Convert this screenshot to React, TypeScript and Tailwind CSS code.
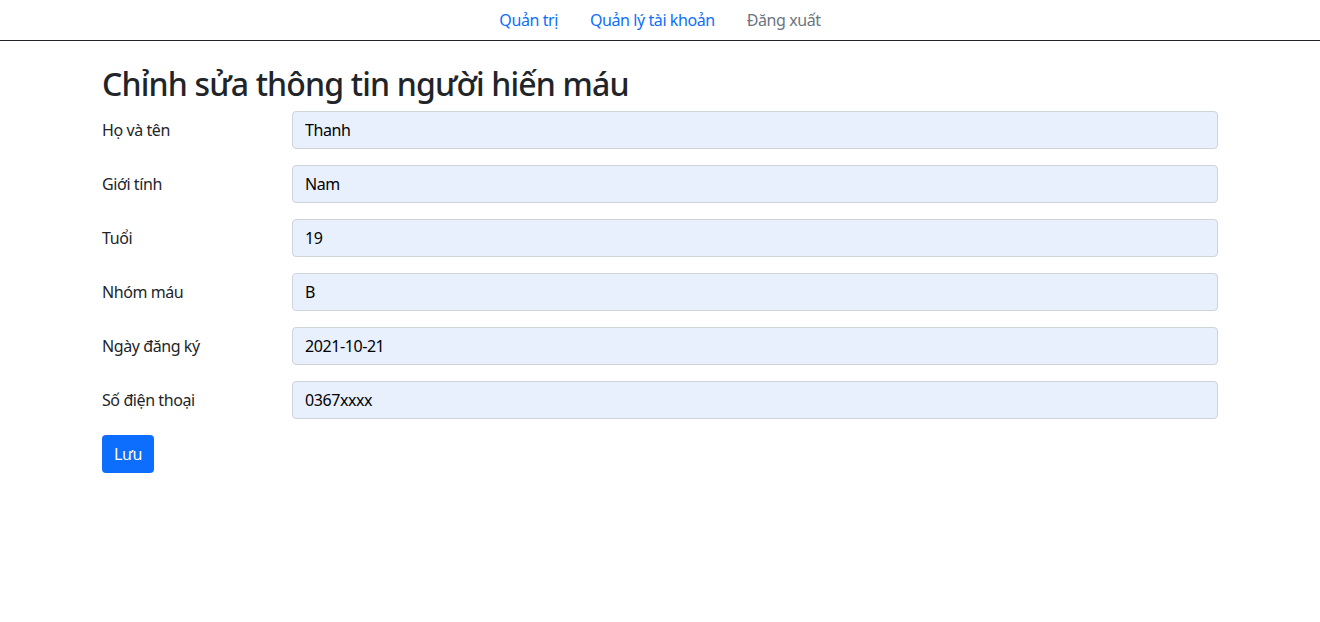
import React from "react";

const fields: { label: string; value: string }[] = [
  { label: "Họ và tên", value: "Thanh" },
  { label: "Giới tính", value: "Nam" },
  { label: "Tuổi", value: "19" },
  { label: "Nhóm máu", value: "B" },
  { label: "Ngày đăng ký", value: "2021-10-21" },
  { label: "Số điện thoại", value: "0367xxxx" },
];

export default function App() {
  return (
    <div
      className="min-h-screen bg-white text-[#212529] text-base leading-6 tracking-[-0.026em]"
      style={{ fontFamily: '"Noto Sans", "Open Sans", sans-serif' }}
    >
      {/* top nav */}
      <nav className="flex justify-center border-b border-[#212529]">
        <a href="#" className="px-4 py-2 text-[#0d6efd]">
          Quản trị
        </a>
        <a href="#" className="px-4 py-2 text-[#0d6efd]">
          Quản lý tài khoản
        </a>
        <a href="#" className="px-4 py-2 text-[#6c757d]">
          Đăng xuất
        </a>
      </nav>

      <div className="mx-auto w-[1140px] px-3">
        <h2 className="mt-6 mb-2 text-[32px] font-medium leading-[1.2] tracking-[-0.026em]">
          Chỉnh sửa thông tin người hiến máu
        </h2>

        <form onSubmit={(e) => e.preventDefault()}>
          {fields.map((f) => (
            <div key={f.label} className="mb-4 flex">
              <label className="w-[190px] shrink-0 pt-[7px] pb-[7px]">
                {f.label}
              </label>
              <input
                defaultValue={f.value}
                className="h-[38px] flex-1 rounded border border-[#ced4da] bg-[#e8f0fe] px-3 py-1.5 text-black tracking-[-0.026em] outline-none"
              />
            </div>
          ))}
          <button
            type="submit"
            className="h-[38px] w-[52px] rounded bg-[#0d6efd] text-white"
          >
            Lưu
          </button>
        </form>
      </div>
    </div>
  );
}
